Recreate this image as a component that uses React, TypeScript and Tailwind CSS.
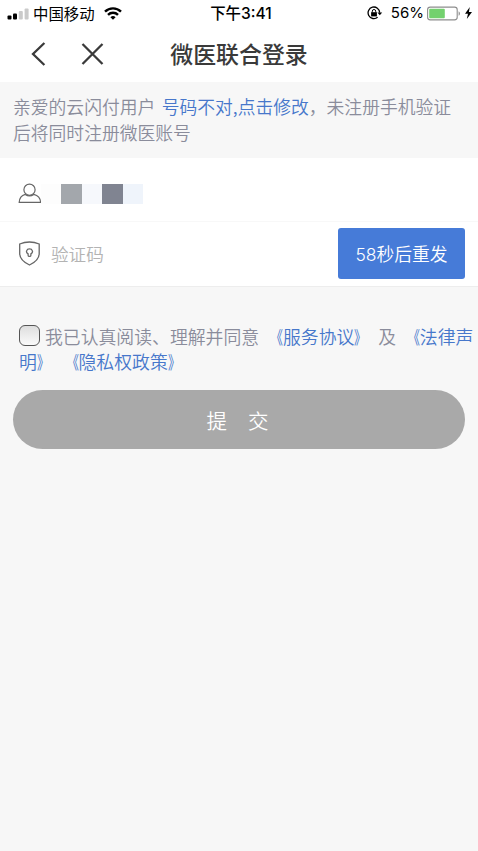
import type { ReactNode } from 'react'

const mosaic = [
  'bg-[#fdfdfd]',
  'bg-[#a3a7ac]',
  'bg-[#f6f8fc]',
  'bg-[#808491]',
  'bg-[#eff4fb]',
]

function Link({ children }: { children: ReactNode }) {
  return <a className="text-[#4777cb]">{children}</a>
}

// Book-title marks, drawn tight against the title they enclose
function Open() {
  return <span className="inline-block origin-right scale-x-[0.68] font-normal">《</span>
}

function Close() {
  return <span className="inline-block origin-left scale-x-[0.68] font-normal">》</span>
}

function StatusBar() {
  return (
    <div className="grid h-[26px] grid-cols-3 items-center text-black">
      <div className="flex items-center pl-[7px]">
        <svg className="h-[12px] w-[23px]" viewBox="0 0 23 12">
          <rect x="0.5" y="7.5" width="4" height="4" rx="1" fill="#000" />
          <rect x="6" y="5.5" width="4" height="6" rx="1" fill="#000" />
          <rect x="11.8" y="3" width="4" height="8.5" rx="1" fill="#cacaca" />
          <rect x="17.6" y="0.5" width="4" height="11" rx="1" fill="#cacaca" />
        </svg>
        <span className="-mt-[2px] ml-[3px] text-[15.4px] leading-[26px] whitespace-nowrap">中国移动</span>
        <svg className="-mt-[1px] ml-[9px] h-[13px] w-[18px] shrink-0" viewBox="0 0 18 13" fill="none" stroke="#000" strokeWidth="2.4">
          <path d="M1 4.7C5.5 0.3 12.5 0.3 17 4.7" />
          <path d="M4 7.8C6.8 5 11.2 5 14 7.8" />
          <path d="M6.4 10.2C8 8.7 10 8.7 11.6 10.2L9 12.8Z" fill="#000" stroke="none" />
        </svg>
      </div>
      <div className="-mt-[1px] pl-[4px] text-center text-[15.4px] leading-[26px] font-medium">
        下午<span className="font-['Inter'] text-[15.6px] font-medium">3:41</span>
      </div>
      <div className="-mt-[1px] flex items-center justify-end pr-[5px]">
        <svg className="h-[14px] w-[16px]" viewBox="0 0 16 14" fill="none" stroke="#000" strokeWidth="1.3">
          <path d="M10.6 11.3A5.8 5.8 0 1 1 12.7 6.6" />
          <path d="M10.4 6.4H15.2L12.8 9.2Z" fill="#000" stroke="none" />
          <rect x="4.1" y="6.2" width="5.8" height="4.2" fill="#000" stroke="none" />
          <path d="M5.3 6.5V5.2a1.7 1.7 0 0 1 3.4 0V6.5" strokeWidth="1" />
        </svg>
        <span className="ml-[8px] font-['Inter'] text-[15px] leading-[26px]">56%</span>
        <svg className="ml-[3px] h-[15px] w-[34px]" viewBox="0 0 34 15">
          <rect x="0.6" y="1.1" width="29.6" height="12.8" rx="2.6" fill="#fff" stroke="#8d8d8d" strokeWidth="1.1" />
          <rect x="2.2" y="2.7" width="15.6" height="9.6" rx="1" fill="#73d16e" />
          <path d="M31.6 5.2C33.4 6 33.4 9 31.6 9.8Z" fill="#8d8d8d" />
        </svg>
        <svg className="ml-[3px] h-[12px] w-[9px]" viewBox="0 0 9 12">
          <path d="M5.8 0L1 6.7H4L2.8 12L8 4.9H4.9Z" fill="#000" />
        </svg>
      </div>
    </div>
  )
}

function NavBar() {
  return (
    <div className="grid h-[56px] grid-cols-[1fr_auto_1fr] items-center text-[#3a3a3a]">
      <div className="flex items-center pl-[31px]">
        <svg className="h-[24px] w-[15px]" viewBox="0 0 15 24" fill="none" stroke="currentColor" strokeWidth="2.3">
          <path d="M13.4 1L2 12L13.4 23" />
        </svg>
        <svg className="ml-[35px] h-[22px] w-[23px]" viewBox="0 0 23 22" fill="none" stroke="currentColor" strokeWidth="2.3">
          <path d="M1.5 1L21.5 21M21.5 1L1.5 21" />
        </svg>
      </div>
      <h1 className="-mt-[2px] text-[22.9px] leading-[54px] font-medium">微医联合登录</h1>
    </div>
  )
}

export default function App() {
  return (
    <div className="h-[851px] w-[478px] overflow-hidden bg-[#f7f7f7] font-['Noto_Sans_CJK_SC',sans-serif]">
      <header className="bg-white">
        <StatusBar />
        <NavBar />
      </header>

      <div className="h-[76px] pt-[12px] pl-[13px] text-[17.8px] leading-[25.5px] font-[350] whitespace-nowrap text-[#8a8c9b] [word-spacing:2.5px]">
        <p>
          亲爱的云闪付用户 <Link>号码不对,点击修改</Link>
          {'\uff0c'}未注册手机验证
        </p>
        <p>后将同时注册微医账号</p>
      </div>

      <div className="border-b border-[#ededed] bg-white">
        {/* Phone */}
        <div className="flex h-[64px] items-center border-b border-[#f8f8f8] pt-[8px] pl-[18px]">
          <svg className="h-[21px] w-[24px]" viewBox="0 0 24 21" fill="none" stroke="#666" strokeWidth="1.2">
            <circle cx="11.5" cy="6.7" r="5.6" />
            <path d="M7.2 11.4C3.6 12.4 1.4 15.4 1.2 19.4H22.6C22.4 15.4 20 12.4 15.8 11.4C13.2 13.2 9.8 13.2 7.2 11.4Z" />
          </svg>
          <div className="-ml-[1.5px] flex h-[20px]">
            {mosaic.map((color) => (
              <span key={color} className={`h-[20px] w-[20.5px] ${color}`} />
            ))}
          </div>
        </div>

        {/* Verification code */}
        <div className="flex h-[64px] items-center pr-[13px] pb-[1px] pl-[18px]">
          <svg className="h-[25px] w-[23px]" viewBox="0 0 23 25" fill="none" stroke="#666" strokeWidth="1.3">
            <path d="M11.5 1C8.6 1 4.5 1.8 1.7 3V12.5C1.7 17.5 6 21.4 11.5 24C17 21.4 21.2 17.5 21.2 12.5V3C18.4 1.8 14.4 1 11.5 1Z" />
            <path d="M10.1 14.2V12.9C7.3 11.4 8.5 7.9 11.5 7.9S15.7 11.4 12.9 12.9V14.2C12.9 15.8 10.1 15.8 10.1 14.2Z" />
          </svg>
          <span className="ml-[10px] flex-1 pt-[1px] text-[17.6px] font-[350] text-[#b3b3b3]">验证码</span>
          <button className="h-[51px] w-[127px] rounded-[3px] bg-[#467bd8] pt-[1px] text-[17.8px] font-[350] text-white">
            <span className="font-['Inter'] text-[17.5px] font-light">58</span>秒后重发
          </button>
        </div>
      </div>

      <div className="mt-[37px] pl-[19px] text-[17.85px] leading-[25.5px] font-[350] whitespace-nowrap text-[#8a8c9b] [word-spacing:2px]">
        <div className="flex items-center">
          <span className="mr-[5px] -mt-[3px] size-[21px] rounded-[6px] border-[1.5px] border-[#555] bg-linear-to-b from-[#dedede] to-[#fafafa]" />
          <p>
            我已认真阅读、理解并同意 <Link><Open />服务协议<Close /></Link> 及 <Link><Open />法律声</Link>
          </p>
        </div>
        <p className="-mt-[1px]">
          <Link>明<Close /> <Open />隐私权政策<Close /></Link>
        </p>
      </div>

      <button className="mt-[16px] ml-[13px] flex h-[59px] w-[452px] items-center justify-center gap-[21px] rounded-full bg-[#a9a9a9] pt-[1px] pr-[3px] text-[20.5px] font-[350] text-white">
        <span>提</span>
        <span>交</span>
      </button>
    </div>
  )
}
